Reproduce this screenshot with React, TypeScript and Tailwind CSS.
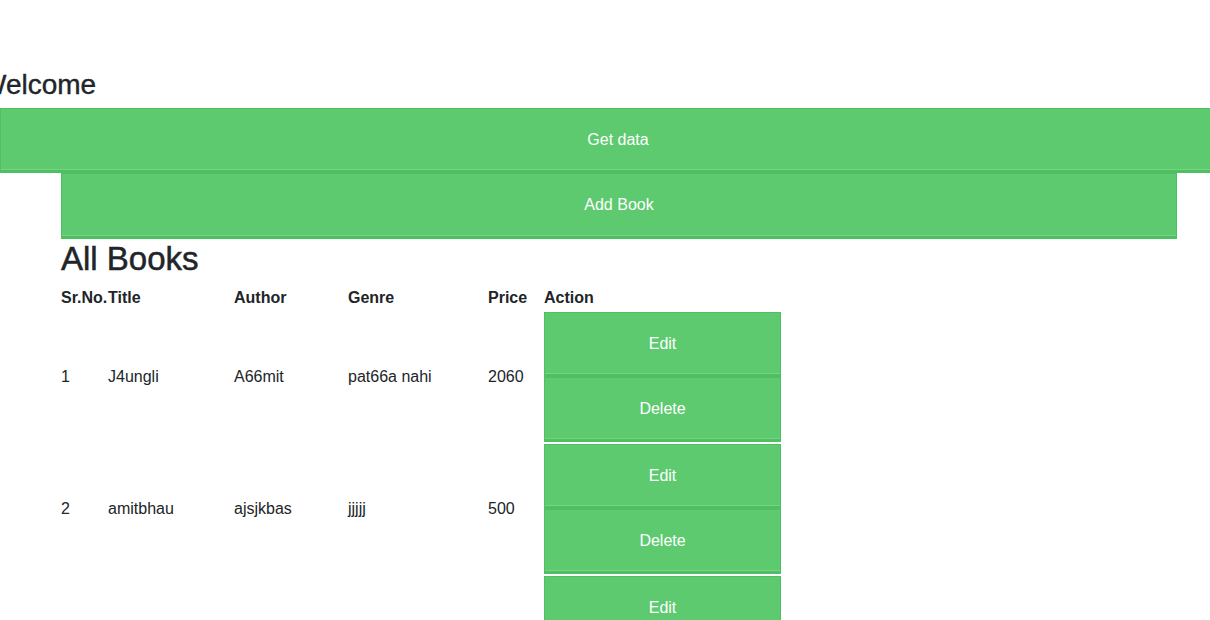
import React from "react";

type Book = { id: number; title: string; author: string; genre: string; price: number };

const books: Book[] = [
    { id: 1, title: "J4ungli", author: "A66mit", genre: "pat66a nahi", price: 2060 },
    { id: 2, title: "amitbhau", author: "ajsjkbas", genre: "jjjjj", price: 500 },
    { id: 3, title: "test", author: "amit", genre: "drama", price: 120 },
];

// bootstrap-ish success button
const btn =
    "block text-white text-[16px] bg-[#5dca70] border border-[#4fc061] border-b-[3px] shadow-[inset_0_-1px_0_#74d484] text-center";

const App = () => {
    return (
        <div className="w-full min-h-screen overflow-hidden bg-white text-[#212529] font-['Liberation_Sans',Arial,sans-serif]">

            {/* top section */}
            <h2 className="text-[28px] leading-[34px] font-medium [-webkit-text-stroke:0.4px] mt-[68px] mb-[6px] -ml-[20px] whitespace-nowrap">
                Welcome
            </h2>
            <button className={`${btn} w-[1236px] h-[65px]`}>Get data</button>
            <button className={`${btn} ml-[61px] w-[1116px] h-[66px]`}>Add Book</button>

            {/* books table */}
            <div className="ml-[61px]">
                <h1 className="text-[33px] leading-[40px] font-medium [-webkit-text-stroke:0.5px]">All Books</h1>

                <table className="mt-[5px] border-separate [border-spacing:0_2px] text-[16px] leading-[24px]">
                    <thead>
                        <tr className="font-bold text-left">
                            <th className="w-[47px] p-0">Sr.No.</th>
                            <th className="w-[126px] p-0">Title</th>
                            <th className="w-[114px] p-0">Author</th>
                            <th className="w-[140px] p-0">Genre</th>
                            <th className="w-[56px] p-0">Price</th>
                            <th className="w-[237px] p-0">Action</th>
                        </tr>
                    </thead>
                    <tbody>
                        {books.map((b) => (
                            <tr key={b.id} className="align-middle">
                                <td className="p-0">{b.id}</td>
                                <td className="p-0">{b.title}</td>
                                <td className="p-0">{b.author}</td>
                                <td className="p-0">{b.genre}</td>
                                <td className="p-0">{b.price}</td>
                                <td className="p-0">
                                    <button className={`${btn} w-[237px] h-[65px]`}>Edit</button>
                                    <button className={`${btn} w-[237px] h-[65px]`}>Delete</button>
                                </td>
                            </tr>
                        ))}
                    </tbody>
                </table>
            </div>
        </div>
    );
};

export default App;
